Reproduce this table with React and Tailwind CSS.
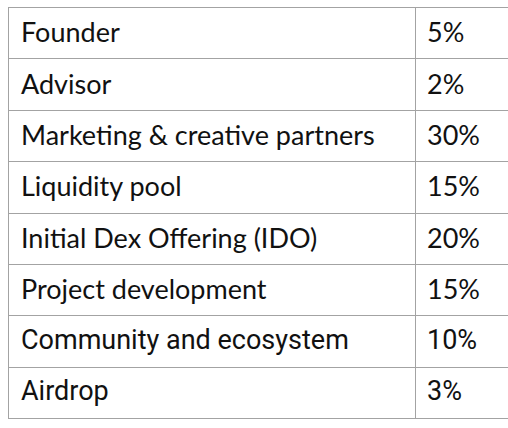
const rows = [
  { name: 'Founder', pct: '5%', font: 'calibri' },
  { name: 'Advisor', pct: '2%', font: 'calibri' },
  { name: 'Marketing & creative partners', pct: '30%', font: 'calibri' },
  { name: 'Liquidity pool', pct: '15%', font: 'calibri' },
  { name: 'Initial Dex Offering (IDO)', pct: '20%', font: 'calibri' },
  { name: 'Project development', pct: '15%', font: 'calibri' },
  { name: 'Community and ecosystem', pct: '10%', font: 'roboto' },
  { name: 'Airdrop', pct: '3%', font: 'roboto' },
];

const fontClass = {
  calibri: "font-['Lato',sans-serif] text-[27px]",
  roboto: "font-['Roboto',sans-serif] text-[27px]",
};

export default function App() {
  return (
    <div className="w-[508px] h-[428px] overflow-hidden bg-white pt-[7px] pl-[8px]">
      <table className="border-collapse w-[560px] text-[#111]">
        <tbody>
          {rows.map((r) => (
            <tr key={r.name} className="h-[51.4px]">
              <td className={`w-[407px] border border-[#a3a3a3] pl-[12px] pb-[3px] leading-none align-middle ${fontClass[r.font]}`}>
                {r.name}
              </td>
              <td className={`border border-[#a3a3a3] pl-[11px] pb-[3px] leading-none align-middle ${fontClass[r.font]}`}>
                {r.pct}
              </td>
            </tr>
          ))}
        </tbody>
      </table>
    </div>
  );
}
